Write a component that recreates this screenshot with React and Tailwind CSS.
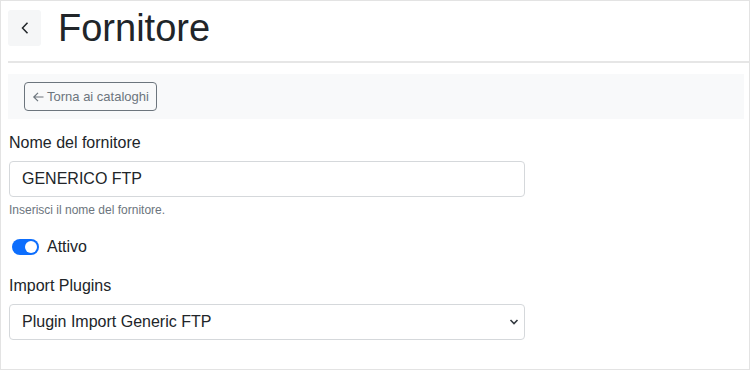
import { useState } from "react";

function App() {
  const [active, setActive] = useState(true);
  const [name, setName] = useState("GENERICO FTP");

  return (
    <div
      className="w-[750px] h-[370px] border border-[#e3e3e3] bg-white text-[#212529] px-[7px] overflow-hidden"
      style={{ fontFamily: '"Liberation Sans", Arial, sans-serif' }}
    >
      {/* Header */}
      <div className="flex items-center pt-[9px]">
        <button
          type="button"
          className="w-[33px] h-[36px] flex items-center justify-center bg-[#f5f6f7] rounded-[3px] text-[#212529]"
        >
          <svg width="10" height="14" viewBox="0 0 10 14" fill="none">
            <path d="M7.5 1.8L2.5 7L7.5 12.2" stroke="currentColor" strokeWidth="1.5" />
          </svg>
        </button>
        <h1 className="ml-[17px] text-[38px] leading-[36px] font-normal">Fornitore</h1>
      </div>
      <div className="mt-[15px] h-[2px] bg-[#e6e6e6] -mr-[7px]"></div>

      {/* Toolbar */}
      <div className="mt-[11px] bg-[#f8f9fa] h-[45px] flex items-center pl-[16px] -mr-[2px]">
        <button
          type="button"
          className="h-[29px] px-[7px] border border-[#6c757d] rounded-[4px] text-[#6c757d] text-[13px] flex items-center gap-[2px]"
        >
          <svg width="13" height="12" viewBox="0 0 13 12" fill="none">
            <path d="M11.5 6H2M6 1.8L1.8 6L6 10.2" stroke="currentColor" strokeWidth="1.2" />
          </svg>
          Torna ai cataloghi
        </button>
      </div>

      {/* Form */}
      <div className="w-[516px] ml-[1px]">
        <label className="block mt-[12px] text-[16px] leading-[24px]">Nome del fornitore</label>
        <input
          type="text"
          value={name}
          onChange={(e) => setName(e.target.value)}
          className="mt-[6px] w-full h-[36px] border border-[#d5d8db] rounded-[4px] px-[12px] text-[16px] text-[#212529] outline-none"
        />
        <p className="mt-[4px] text-[12px] leading-[18px] text-[#6c757d]">
          Inserisci il nome del fornitore.
        </p>

        <div className="mt-[16px] flex items-center h-[24px]">
          <button
            type="button"
            onClick={() => setActive(!active)}
            className={`ml-[3px] w-[27px] h-[16px] rounded-full flex items-center px-[2px] ${
              active ? "bg-[#0d6efd] justify-end" : "bg-white border border-[#ced4da] justify-start"
            }`}
          >
            <span className={`w-[12px] h-[12px] rounded-full ${active ? "bg-white" : "bg-[#ced4da]"}`}></span>
          </button>
          <span className="ml-[8px] text-[16px]">Attivo</span>
        </div>

        <label className="block mt-[15px] text-[16px] leading-[24px]">Import Plugins</label>
        <div className="relative mt-[6px]">
          <select className="w-full h-[36px] appearance-none border border-[#d5d8db] rounded-[4px] pl-[12px] pr-[36px] text-[16px] text-[#212529] bg-white outline-none">
            <option>Plugin Import Generic FTP</option>
          </select>
          <svg
            className="absolute right-[6px] top-[14px] pointer-events-none"
            width="10"
            height="8"
            viewBox="0 0 10 8"
            fill="none"
          >
            <path d="M1.5 2L5 5.5L8.5 2" stroke="#343a40" strokeWidth="1.6" />
          </svg>
        </div>
      </div>
    </div>
  );
}

export default App;
